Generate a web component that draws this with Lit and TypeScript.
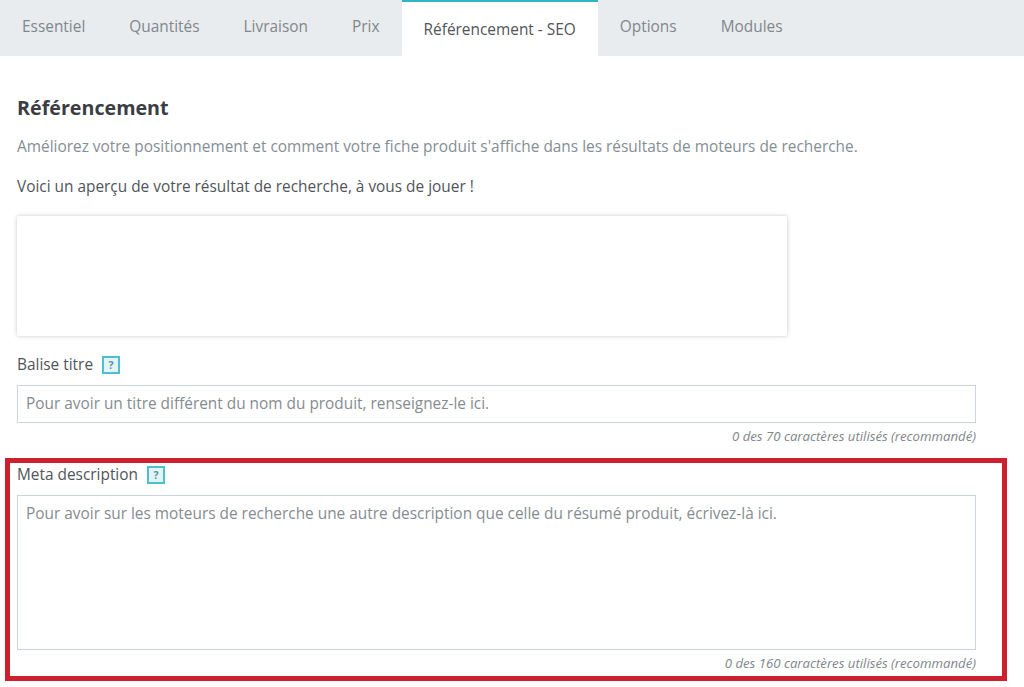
import { LitElement, html, css } from "lit";
import { customElement } from "lit/decorators.js";

const TABS: [string, boolean][] = [
  ["Essentiel", false],
  ["Quantités", false],
  ["Livraison", false],
  ["Prix", false],
  ["Référencement - SEO", true],
  ["Options", false],
  ["Modules", false],
];

@customElement("app-root")
export class AppRoot extends LitElement {
  static styles = css`
    :host {
      display: block;
      width: 1024px;
      height: 687px;
      overflow: hidden;
      background: #fff;
      font-family: "Open Sans", "Noto Sans", sans-serif;
      color: #363a41;
    }
    .tabs {
      display: flex;
      height: 56px;
      background: #e9ecee;
    }
    .tab {
      box-sizing: border-box;
      height: 56px;
      padding: 17px 22px 0;
      font-size: 15.42px;
      line-height: 20px;
      color: #80878c;
    }
    .tab.active {
      padding-top: 18px;
      background: #fff;
      border-top: 2px solid #30b5c6;
      color: #50555a;
    }
    .content {
      display: flex;
      flex-direction: column;
      padding: 40px 48px 0 17px;
    }
    h2 {
      margin: 0;
      font-size: 19.7px;
      line-height: 24px;
      font-weight: 700;
      color: #3a3e44;
    }
    .lead {
      margin: 17px 0 0;
      font-size: 15.42px;
      line-height: 20px;
      color: #848e96;
    }
    .hint {
      margin: 20px 0 0;
      font-size: 15.4px;
      line-height: 20px;
      color: #50555a;
    }
    .preview {
      box-sizing: border-box;
      width: 770px;
      height: 120px;
      margin-top: 19px;
      background: #fff;
      border-radius: 2px;
      box-shadow: 0 0 4px rgba(0, 0, 0, 0.22);
    }
    .label {
      display: flex;
      align-items: center;
      gap: 9px;
      font-size: 15.4px;
      line-height: 20px;
      color: #50555a;
    }
    .title-label {
      margin-top: 19px;
    }
    .help {
      box-sizing: border-box;
      width: 18px;
      height: 18px;
      display: flex;
      align-items: center;
      justify-content: center;
      border: 2px solid #4cbfd0;
      background: #e3f4f7;
      color: #5f8f9c;
      font-size: 10.5px;
      font-weight: 700;
      line-height: 1;
    }
    .field {
      box-sizing: border-box;
      border: 1px solid #cbd5da;
      color: #858c92;
      font-size: 15.4px;
      line-height: 20px;
      padding: 8px 8px;
    }
    .single {
      height: 38px;
      margin-top: 10px;
    }
    .multi {
      height: 155px;
      margin-top: 10px;
    }
    .count {
      font-size: 13.2px;
      line-height: 16px;
      font-style: italic;
      color: #80868c;
      text-align: right;
      margin-top: 5px;
    }
    .highlight {
      box-sizing: border-box;
      width: 1002px;
      height: 223px;
      margin: 14px 0 0 -12px;
      padding: 2px 26px 0 7px;
      border: 5px solid #ce202c;
    }
  `;

  render() {
    return html`
      <div class="tabs">
        ${TABS.map(
          ([t, on]) => html`<div class="tab ${on ? "active" : ""}">${t}</div>`
        )}
      </div>
      <div class="content">
        <h2>Référencement</h2>
        <p class="lead">
          Améliorez votre positionnement et comment votre fiche produit
          s'affiche dans les résultats de moteurs de recherche.
        </p>
        <p class="hint">Voici un aperçu de votre résultat de recherche, à vous de jouer !</p>
        <div class="preview"></div>
        <div class="label title-label">Balise titre <span class="help">?</span></div>
        <div class="field single">Pour avoir un titre différent du nom du produit, renseignez-le ici.</div>
        <div class="count">0 des 70 caractères utilisés (recommandé)</div>
        <div class="highlight">
          <div class="label">Meta description <span class="help">?</span></div>
          <div class="field multi">
            Pour avoir sur les moteurs de recherche une autre description que celle du résumé produit, écrivez-là ici.
          </div>
          <div class="count">0 des 160 caractères utilisés (recommandé)</div>
        </div>
      </div>
    `;
  }
}
